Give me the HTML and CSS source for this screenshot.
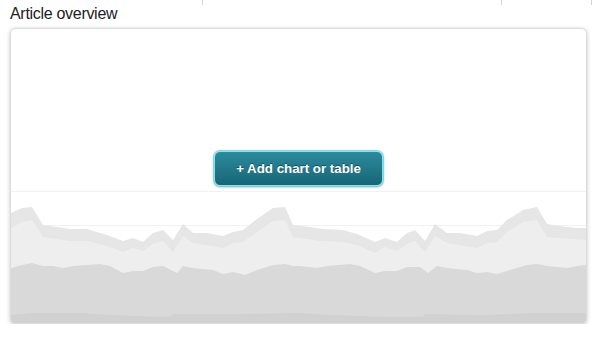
FILE: index.html
```html
<!DOCTYPE html>
<html lang="en">
<head>
    <meta charset="UTF-8">
    <meta name="viewport" content="width=device-width, initial-scale=1.0">
    <title>Article overview</title>
    <link rel="stylesheet" href="styles.css">
</head>
<body>
    <div class="prev-row">
        <div class="prev-gap"></div>
        <div class="prev-cell wide"></div>
        <div class="prev-cell narrow"></div>
    </div>

    <h2 class="section-title">Article overview</h2>

    <div class="card">
        <!-- placeholder chart behind the button -->
        <svg class="chart" width="575" height="294" viewBox="11 29 575 294" preserveAspectRatio="none">
            <line x1="11" y1="191.5" x2="586" y2="191.5" stroke="#f1f1f1" stroke-width="1"/>
            <line x1="11" y1="225.5" x2="586" y2="225.5" stroke="#f1f1f1" stroke-width="1"/>
            <polygon fill="#e6e6e6" points="11,213 22,208 32,207 43,225 57,227 70,229 87,229 97,232 110,236 123,241 133,238 143,242 153,233 163,230 173,240 183,224 193,233 207,233 223,236 233,232 243,230 257,219 273,208 285,207 293,225 310,227 323,229 343,230 357,234 375,242 385,238 397,242 407,233 415,230 425,241 435,224 447,233 460,233 477,236 487,231 497,230 507,220 523,210 537,207 547,224 567,227 577,228 586,228 586,323 11,323"/>
            <polygon fill="#eeeeee" points="11,228 22,222 32,220 43,237 70,241 87,241 110,247 123,252 133,248 143,251 153,244 163,241 173,252 183,236 193,243 223,248 233,243 243,242 257,232 273,221 285,220 293,237 320,241 343,242 357,245 375,253 385,247 397,251 407,244 415,241 425,252 435,236 447,243 477,248 487,243 497,242 507,232 523,222 537,220 547,237 586,240 586,323 11,323"/>
            <polygon fill="#d9d9d9" points="11,268 22,265 32,263 43,266 53,266 63,268 73,266 87,265 100,264 110,266 123,273 133,271 143,271 153,267 163,266 177,273 183,266 193,268 213,270 223,274 233,272 245,275 257,270 273,265 285,264 293,266 300,266 317,268 327,266 350,264 360,266 375,273 385,271 397,271 407,267 420,267 428,273 437,266 447,268 467,270 477,273 487,272 497,274 510,270 527,265 537,264 547,266 567,268 577,266 586,265 586,323 11,323"/>
            <polygon fill="#d1d1d1" points="11,315 33,313 83,313 93,314 133,316 170,317 173,314 233,314 300,313 333,315 383,317 423,317 425,314 483,315 533,313 586,313 586,323 11,323"/>
        </svg>
        <button class="add-button">+ Add chart or table</button>
    </div>
</body>
</html>
```

FILE: styles.css
```css
body {
    margin: 0;
    background: #fff;
    font-family: "Liberation Sans", Arial, sans-serif;
}
.prev-row {
    display: flex;
    height: 5px;
}
.prev-gap {
    width: 202px;
}
.prev-cell {
    border-left: 1px solid #d4d4d4;
}
.prev-cell.wide {
    width: 298px;
}
.prev-cell.narrow {
    width: 89px;
    border-right: 1px solid #d4d4d4;
}
.section-title {
    margin: 0 0 5px 10px;
    font-size: 16px;
    line-height: 18px;
    font-weight: normal;
    letter-spacing: -0.3px;
    color: #222;
}
.card {
    display: grid;
    width: 575px;
    height: 294px;
    margin-left: 10px;
    border: 1px solid #dcdcdc;
    border-radius: 5px;
    box-shadow: 0 1px 4px rgba(0,0,0,0.22);
    overflow: hidden;
    background: #fff;
}
.chart {
    grid-area: 1 / 1;
    display: block;
}
.add-button {
    grid-area: 1 / 1;
    align-self: start;
    justify-self: center;
    margin-top: 122px;
    width: 169px;
    height: 35px;
    padding: 0;
    border: 1px solid #86e1ee;
    border-radius: 6px;
    background: linear-gradient(#2c8b9d, #176676);
    box-shadow: 0 0 1px 1px rgba(95,205,222,0.8), 0 1px 3px rgba(0,0,0,0.3);
    color: #fff;
    font-family: "Liberation Sans", Arial, sans-serif;
    font-size: 13.3px;
    font-weight: bold;
    text-shadow: 0 -1px 0 rgba(0,0,0,0.4);
    cursor: pointer;
}
```
